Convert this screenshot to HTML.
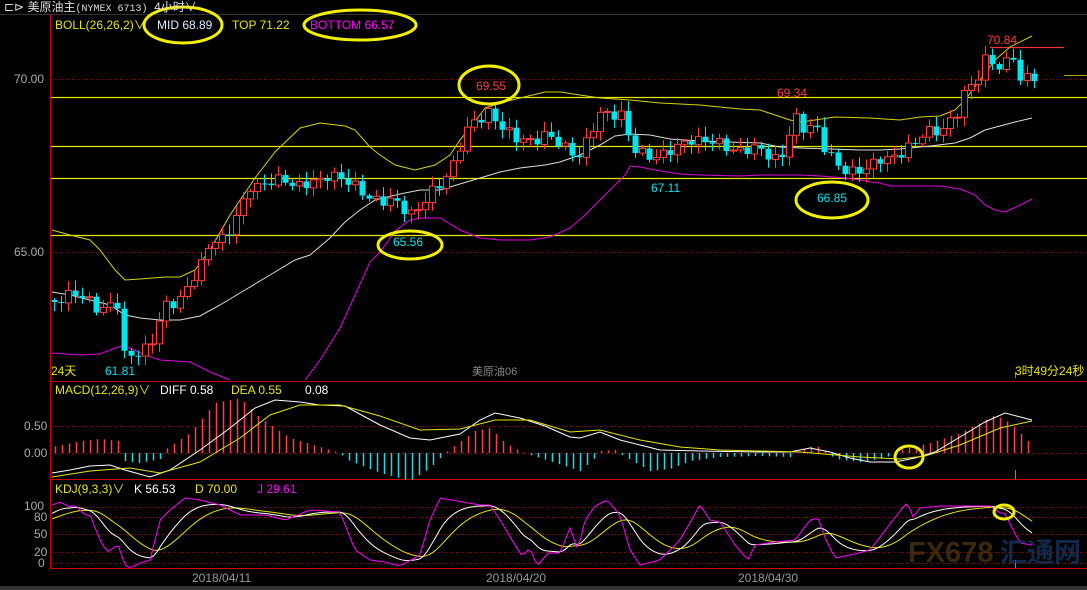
<!DOCTYPE html>
<html><head><meta charset="utf-8"><style>
*{margin:0;padding:0}
body{width:1087px;height:590px;background:#000;overflow:hidden;position:relative;font-family:"Liberation Sans","Noto Sans CJK SC",sans-serif;font-size:12px}
.t{position:absolute;white-space:nowrap;line-height:14px}
svg{position:absolute;left:0;top:0}
</style></head><body>
<svg id="s" width="1087" height="590" xmlns="http://www.w3.org/2000/svg"></svg>
<div class="t" style="left:4px;top:0;color:#ddd">⊏⊳ 美原油主<span style="font-family:'Liberation Mono',monospace;font-size:10px">(NYMEX 6713)</span>&nbsp; 4小时∨</div>
<div class="t" style="left:55px;top:18px;color:#e6e600">BOLL(26,26,2)∨</div>
<div class="t" style="left:157px;top:18px;color:#ddeeff">MID 68.89</div>
<div class="t" style="left:232px;top:18px;color:#e6e600">TOP 71.22</div>
<div class="t" style="left:310px;top:18px;color:#ff00ff">BOTTOM 66.57</div>
<div class="t" style="left:14px;top:72px;color:#aaa">70.00</div>
<div class="t" style="left:14px;top:245px;color:#aaa">65.00</div>
<div class="t" style="left:476px;top:79px;color:#ff3c3c">69.55</div>
<div class="t" style="left:393px;top:235px;color:#00e5ee">65.56</div>
<div class="t" style="left:651px;top:181px;color:#00e5ee">67.11</div>
<div class="t" style="left:777px;top:86px;color:#ff3c3c">69.34</div>
<div class="t" style="left:817px;top:191px;color:#00e5ee">66.85</div>
<div class="t" style="left:987px;top:33px;color:#ff3c3c">70.84</div>
<div class="t" style="left:105px;top:364px;color:#00e5ee">61.81</div>
<div class="t" style="left:51px;top:364px;color:#e6e600">24天</div>
<div class="t" style="left:472px;top:365px;color:#888;font-size:11px">美原油06</div>
<div class="t" style="left:1015px;top:364px;color:#e6e600">3时49分24秒</div>
<div class="t" style="left:55px;top:383px;color:#e6e600">MACD(12,26,9)∨</div>
<div class="t" style="left:160px;top:383px;color:#fff">DIFF 0.58</div>
<div class="t" style="left:231px;top:383px;color:#e6e600">DEA 0.55</div>
<div class="t" style="left:305px;top:383px;color:#fff">0.08</div>
<div class="t" style="left:24px;top:419px;color:#aaa">0.50</div>
<div class="t" style="left:24px;top:446px;color:#aaa">0.00</div>
<div class="t" style="left:55px;top:482px;color:#e6e600">KDJ(9,3,3)∨</div>
<div class="t" style="left:134px;top:482px;color:#fff">K 56.53</div>
<div class="t" style="left:195px;top:482px;color:#e6e600">D 70.00</div>
<div class="t" style="left:257px;top:482px;color:#ff00ff">J 29.61</div>
<div class="t" style="left:24px;top:499px;color:#aaa">100</div>
<div class="t" style="left:34px;top:510px;color:#aaa">80</div>
<div class="t" style="left:34px;top:527px;color:#aaa">50</div>
<div class="t" style="left:34px;top:545px;color:#aaa">20</div>
<div class="t" style="left:38px;top:556px;color:#aaa">0</div>
<div class="t" style="left:192px;top:571px;color:#999">2018/04/11</div>
<div class="t" style="left:486px;top:571px;color:#999">2018/04/20</div>
<div class="t" style="left:738px;top:571px;color:#999">2018/04/30</div>
<div class="t" style="left:908px;top:537px;color:#6a4a1a;font-size:29px;font-weight:bold;line-height:32px;opacity:.55">FX678</div>
<div class="t" style="left:1000px;top:537px;color:#1a3a6a;font-size:27px;font-weight:bold;line-height:32px;opacity:.7">汇通网</div>
<script>
var s=document.getElementById('s'),h='';
function L(x1,y1,x2,y2,c,w,d){h+='<line x1="'+x1+'" y1="'+y1+'" x2="'+x2+'" y2="'+y2+'" stroke="'+c+'" stroke-width="'+(w||1)+'"'+(d?' stroke-dasharray="'+d+'"':'')+'/>';}
function P(pts,c){h+='<polyline fill="none" stroke="'+c+'" stroke-width="1" points="'+pts.map(p=>p.join(',')).join(' ')+'"/>';}
function interp(k,x){for(var i=0;i<k.length-1;i++){if(x<=k[i+1][0]){var a=k[i],b=k[i+1];return a[1]+(b[1]-a[1])*(x-a[0])/(b[0]-a[0]);}}return k[k.length-1][1];}
h+='<rect x="0" y="586" width="1087" height="4" fill="#333"/>';
L(0,14.5,1087,14.5,'#333');
L(50.5,14,50.5,568,'#c00');
L(50,381.5,1087,381.5,'#c00');L(50,479.5,1087,479.5,'#c00');L(50,568.5,1087,568.5,'#c00');
[79.5,252.5,426.5,453.5,507.5,517.5,534.5,552.5,563.5].forEach(y=>L(51,y,1087,y,'#900',1,'1,2'));
[97.5,146.5,178.5,235.5].forEach(y=>L(51,y,1087,y,'#e6e600',1.3));
L(990,47.5,1064,47.5,'#e33',1.3);L(1064,75.5,1087,75.5,'#aa0');
L(1015.5,372,1015.5,378,'#888');L(1015.5,470,1015.5,479,'#888');L(1015.5,560,1015.5,568,'#888');
P([[52,230],[70,235],[90,240],[100,250],[115,270],[125,280],[140,279],[165,277],[180,277],[195,270],[210,250],[230,215],[255,178],[275,152],[300,128],[320,123],[345,126],[355,130],[370,147],[380,155],[395,165],[415,170],[435,165],[450,155],[460,140],[470,128],[485,108],[500,103],[520,98],[545,92],[560,92],[580,95],[600,98],[630,100],[660,103],[680,104],[700,105],[740,109],[760,110],[775,115],[790,120],[800,122],[815,120],[835,117],[870,118],[900,120],[920,117],[940,116],[955,110],[965,100],[980,80],[995,60],[1010,47],[1032,36]],'#d4d400');
P([[52,292],[70,295],[90,300],[110,305],[125,315],[140,318],[160,320],[180,320],[200,316],[220,305],[245,290],[270,275],[295,260],[310,255],[330,238],[345,222],[360,210],[375,200],[400,194],[420,190],[440,190],[460,184],[480,178],[500,172],[520,168],[545,165],[560,162],[580,155],[600,145],[615,136],[630,134],[650,135],[670,139],[700,141],[730,142],[760,143],[780,147],[800,148],[830,149],[860,150],[880,150],[900,149],[930,146],[955,143],[970,138],[985,130],[1000,126],[1015,122],[1032,118]],'#ddd');
P([[52,353],[80,355],[100,354],[115,348],[123,346],[130,348],[145,355],[160,360],[190,362],[210,372],[230,380]],'#e000e0');
P([[305,380],[320,360],[340,328],[355,295],[370,262],[380,252],[395,231],[410,220],[420,218],[440,218],[460,230],[480,238],[500,240],[530,240],[550,237],[570,228],[585,215],[600,200],[615,185],[625,175],[630,166],[640,167],[660,171],[680,174],[700,175],[740,176],[760,175],[780,175],[800,175],[820,176],[845,178],[860,180],[870,182],[880,183],[890,186],[915,186],[940,186],[960,189],[975,195],[985,205],[995,210],[1005,212],[1020,205],[1032,199]],'#e000e0');
var ck=[[54,300],[75,295],[90,300],[100,310],[115,305],[122,307],[124,355],[135,352],[150,348],[158,325],[165,305],[180,298],[190,285],[200,268],[210,240],[218,237],[225,240],[240,210],[250,185],[260,185],[270,183],[285,180],[300,185],[320,182],[330,172],[345,180],[355,188],[365,195],[380,200],[395,203],[405,210],[412,213],[420,205],[430,195],[440,185],[450,170],[460,145],[470,125],[480,120],[490,110],[500,125],[515,140],[530,140],[545,135],[560,145],[580,155],[590,135],[600,115],[610,112],[625,115],[630,150],[645,155],[660,155],[675,150],[690,138],[700,140],[720,145],[740,150],[760,150],[780,160],[795,118],[800,130],[810,125],[815,123],[825,150],[840,170],[855,170],[870,168],[880,160],[895,155],[905,150],[915,145],[925,130],[940,130],[955,120],[965,90],[975,80],[985,60],[993,65],[1002,70],[1012,50],[1020,80],[1027,78],[1033,78]];
(function(){
var prev=interp(ck,54);
for(var i=0;i<141;i++){var x=54+i*7;if(x>1034)break;var c=interp(ck,x)+Math.sin(i*2.3)*5+Math.cos(i*1.1)*2;var o=prev;prev=c;
 var tp=Math.min(o,c),bt=Math.max(o,c);if(bt-tp<1){bt=tp+1;}
 var wt=tp-2-Math.abs(Math.sin(i*3.7))*8,wb=bt+2+Math.abs(Math.cos(i*2.9))*7;
 var up=c<o,col=up?'#ff3c3c':'#00e5ee';
 L(x+0.5,wt,x+0.5,wb,col);
 if(up)h+='<rect x="'+(x-2.5)+'" y="'+tp+'" width="6" height="'+(bt-tp)+'" fill="#000" stroke="'+col+'"/>';
 else h+='<rect x="'+(x-2.5)+'" y="'+tp+'" width="6" height="'+(bt-tp)+'" fill="'+col+'"/>';
}})();
var hk=[[52,-6],[80,-12],[100,-14],[118,-12],[122,0],[124,8],[140,10],[160,6],[163,0],[166,-4],[190,-20],[215,-50],[240,-55],[260,-35],[290,-15],[330,-3],[340,0],[345,6],[380,20],[410,28],[430,15],[445,0],[450,-4],[475,-22],[490,-25],[505,-10],[520,-2],[530,2],[540,5],[580,18],[595,5],[600,-2],[615,-3],[622,2],[650,18],[670,16],[690,8],[720,4],[760,3],[790,4],[800,-2],[815,-8],[825,-2],[835,6],[860,9],[885,5],[895,0],[900,-3],[930,-10],[960,-20],[980,-30],[995,-38],[1010,-30],[1032,-8]];
for(var xx=55;xx<=1032;xx+=7){var v=interp(hk,xx);L(xx+0.5,453,xx+0.5,453+v,v<0?'#ff4040':'#20d8e0',1.5);}
P([[52,473],[70,470],[90,466],[110,465],[125,470],[150,477],[170,470],[200,450],[230,428],[255,408],[275,400],[300,402],[320,405],[345,406],[380,425],[410,438],[430,440],[460,434],[480,420],[495,413],[520,418],[545,426],[570,437],[580,438],[600,432],[620,440],[640,445],[660,450],[700,451],[760,452],[790,452],[810,448],[830,452],[850,458],[870,462],[895,462],[915,458],[935,452],[960,437],[985,422],[1005,413],[1032,420]],'#fff');
P([[52,477],[90,471],[130,468],[160,473],[200,462],[240,438],[270,415],[300,405],[340,405],[380,416],[420,430],[460,429],[495,420],[530,420],[570,432],[600,430],[640,440],[680,447],[720,450],[800,452],[860,457],[900,459],[925,456],[960,445],[1000,428],[1032,421]],'#e6e600');
var jk=[[52,505],[60,502],[70,507],[75,505],[85,515],[90,515],[100,540],[107,552],[113,548],[118,545],[125,565],[130,568],[140,563],[150,560],[160,520],[170,510],[185,498],[200,500],[220,505],[240,515],[265,515],[285,520],[310,510],[340,512],[355,550],[370,560],[385,562],[400,566],[420,555],[430,520],[440,498],[480,505],[490,505],[500,520],[515,545],[522,556],[530,548],[537,566],[548,553],[560,553],[570,528],[578,550],[585,520],[595,506],[607,500],[620,515],[630,550],[640,565],[660,560],[680,540],[700,505],[710,520],[720,522],[735,545],[748,560],[755,545],[775,542],[795,540],[810,520],[818,518],[826,540],[835,558],[855,554],[870,550],[893,520],[905,505],[908,502],[912,518],[920,508],[940,506],[990,506],[1000,513],[1005,513],[1012,528],[1020,543],[1032,545]];
var J=[],K=[],D=[],k=515,d=520;
for(var x2=52;x2<=1032;x2+=3.5){var j=interp(jk,x2);J.push([x2,j]);k=k+(j-k)*0.17;d=d+(k-d)*0.17;K.push([x2,k]);D.push([x2,d]);}
P(D,'#e6e600');P(K,'#fff');P(J,'#ff00ff');
function E(cx,cy,rx,ry){h+='<ellipse cx="'+cx+'" cy="'+cy+'" rx="'+rx+'" ry="'+ry+'" fill="none" stroke="#f0f000" stroke-width="3"/>';}
E(183,25,39,18);E(360,25,56,15);E(489,85,30,19);E(410,245,32,14);E(832,200,36,18);E(909,457,14,11);E(1004,512,10,7);
s.innerHTML=h;
</script>
</body></html>
